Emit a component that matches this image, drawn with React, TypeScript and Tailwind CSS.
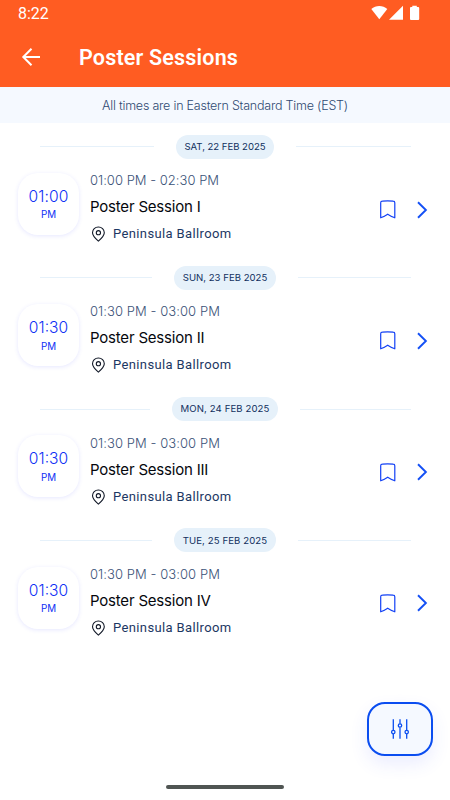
type Session = {
  date: string
  dateClass: string
  start: string
  startClass: string
  range: string
  rangeClass: string
  title: string
}

const sessions: Session[] = [
  {
    date: 'SAT, 22 FEB 2025',
    dateClass: 'w-[98px] tracking-[-0.04px]',
    start: '01:00',
    startClass: 'tracking-[0.1px]',
    range: '01:00 PM - 02:30 PM',
    rangeClass: 'tracking-[0.02px]',
    title: 'Poster Session I',
  },
  {
    date: 'SUN, 23 FEB 2025',
    dateClass: 'w-[102px] tracking-[0px]',
    start: '01:30',
    startClass: 'tracking-[0px]',
    range: '01:30 PM - 03:00 PM',
    rangeClass: 'tracking-[0.07px]',
    title: 'Poster Session II',
  },
  {
    date: 'MON, 24 FEB 2025',
    dateClass: 'w-[106px] tracking-[0.1px]',
    start: '01:30',
    startClass: 'tracking-[0px]',
    range: '01:30 PM - 03:00 PM',
    rangeClass: 'tracking-[0.07px]',
    title: 'Poster Session III',
  },
  {
    date: 'TUE, 25 FEB 2025',
    dateClass: 'w-[102px] tracking-[0.1px]',
    start: '01:30',
    startClass: 'tracking-[0px]',
    range: '01:30 PM - 03:00 PM',
    rangeClass: 'tracking-[0.07px]',
    title: 'Poster Session IV',
  },
]

function StatusIcons() {
  return (
    <svg width="50" height="16" viewBox="0 0 50 16" fill="white">
      <path d="M1.3 4C5.7 -0.1 12.9 -0.1 17.3 4L9.3 14.3Z" />
      <path d="M33 0.8V14.8H19Z" />
      <path d="M42.3 2V0.8H46.8V2H48.2Q49.2 2 49.2 3V14Q49.2 15 48.2 15H41Q40 15 40 14V3Q40 2 41 2Z" />
    </svg>
  )
}

function BackIcon() {
  return (
    <svg width="20" height="20" viewBox="0 0 20 20" fill="none" stroke="white" strokeWidth="2">
      <path d="M19 10H2.2M10.5 1.8L2.3 10L10.5 18.2" />
    </svg>
  )
}

function PinIcon() {
  return (
    <svg width="14" height="16" viewBox="0 0 14 16" fill="none" stroke="#111827" strokeWidth="1.1">
      <path d="M7.4 15.1C5 13 1.5 9.9 1.5 6.7C1.5 3.4 4.1 1 7.4 1S13.3 3.4 13.3 6.7C13.3 9.9 9.8 13 7.4 15.1Z" />
      <circle cx="7.4" cy="6.7" r="2.1" />
    </svg>
  )
}

function BookmarkIcon() {
  return (
    <svg width="16" height="19" viewBox="0 0 16 19" fill="none" stroke="#1240f5" strokeWidth="1.2" strokeLinejoin="round">
      <path d="M0.7 17.8V2.8Q0.7 1.2 2.3 1.2Q7.7 0.6 13.1 1.2Q14.8 1.2 14.8 2.8V17.8Q11 16.4 7.7 14.2Q4.4 16.4 0.7 17.8Z" />
    </svg>
  )
}

function ChevronIcon() {
  return (
    <svg width="11" height="18" viewBox="0 0 11 18" fill="none" stroke="#1450f5" strokeWidth="1.9">
      <path d="M1 1.2L8.9 9L1 16.8" />
    </svg>
  )
}

function FilterIcon() {
  return (
    <svg width="20" height="20" viewBox="0 0 20 20" fill="none" stroke="#0a4df0" strokeWidth="1.3">
      <path d="M3.3 0.3V11.3M3.3 15V19.7M10 0.3V4.7M10 8.4V19.7M16.7 0.3V11.3M16.7 15V19.7" />
      <circle cx="3.3" cy="13.1" r="1.7" />
      <circle cx="10" cy="6.5" r="1.7" />
      <circle cx="16.7" cy="13.1" r="1.7" />
    </svg>
  )
}

function SessionGroup({ session }: { session: Session }) {
  return (
    <section className="h-[131.25px]">
      {/* Date divider */}
      <div className="flex items-center gap-[22px] px-[39.5px]">
        <div className="h-px flex-1 bg-[#e6f1fa]" />
        <div
          className={`flex h-6 items-center justify-center rounded-full bg-[#e6f1fa] pt-px text-[9.6px] whitespace-nowrap text-[#12305e] ${session.dateClass}`}
        >
          {session.date}
        </div>
        <div className="h-px flex-1 bg-[#e6f1fa]" />
      </div>

      <div className="mt-[13.6px] flex pr-[22px] pl-[18px]">
        <div className="mt-[0.7px] flex h-[62px] w-[61px] shrink-0 flex-col items-center rounded-[20px] bg-white pt-[14.2px] text-[#1030f5] shadow-[0_1px_4px_rgba(60,70,255,0.13)]">
          <span className={`text-[15.6px] leading-5 font-light ${session.startClass}`}>{session.start}</span>
          <span className="mt-[0.5px] text-[9.8px] leading-4">PM</span>
        </div>

        <div className="ml-[11px] flex-1">
          <p className={`text-[13px] leading-4 font-light text-[#3a5277] ${session.rangeClass}`}>{session.range}</p>
          <p className="mt-[9px] text-[15px] leading-5 tracking-[-0.2px] text-[#05070d]">{session.title}</p>
          <div className="mt-[9px] flex items-center gap-2 pl-px">
            <PinIcon />
            <span className="font-['Roboto',sans-serif] text-[13px] leading-4 tracking-[0.37px] text-[#1c3763]">
              Peninsula Ballroom
            </span>
          </div>
        </div>

        <div className="mt-[27.6px] flex h-5 items-center gap-[21px]">
          <BookmarkIcon />
          <ChevronIcon />
        </div>
      </div>
    </section>
  )
}

export default function App() {
  return (
    <div className="relative flex h-[800px] w-[450px] flex-col overflow-hidden bg-white font-['Inter',sans-serif]">
      {/* Status bar and title */}
      <header className="h-[87px] bg-[#ff5c22] font-['Roboto',sans-serif] text-white">
        <div className="flex h-[26px] items-center justify-between pr-[30px] pl-[18px]">
          <span className="pt-px text-[16px] leading-none">8:22</span>
          <StatusIcons />
        </div>
        <div className="flex h-[62px] items-center pl-[21px]">
          <BackIcon />
          <h1 className="ml-[38px] pt-[2px] text-[21.5px] font-semibold tracking-[0.18px]">Poster Sessions</h1>
        </div>
      </header>

      <div className="flex h-[36px] items-center justify-center bg-[#f5f9ff] pt-[2px] text-[12.5px] font-light tracking-[-0.22px] text-[#304a72]">
        All times are in Eastern Standard Time (EST)
      </div>

      <main className="pt-[11.5px]">
        {sessions.map((session) => (
          <SessionGroup key={session.date} session={session} />
        ))}
      </main>

      {/* Filter button */}
      <button className="absolute top-[701.5px] left-[367px] flex h-[54.5px] w-[65.5px] items-center justify-center rounded-[18px] border-2 border-[#0a4df0] bg-[#f5f9ff] shadow-[0_8px_18px_rgba(60,80,255,0.1)]">
        <FilterIcon />
      </button>

      <div className="absolute bottom-[11px] left-[166px] h-1 w-[118px] rounded-full bg-[#505553]" />
    </div>
  )
}
